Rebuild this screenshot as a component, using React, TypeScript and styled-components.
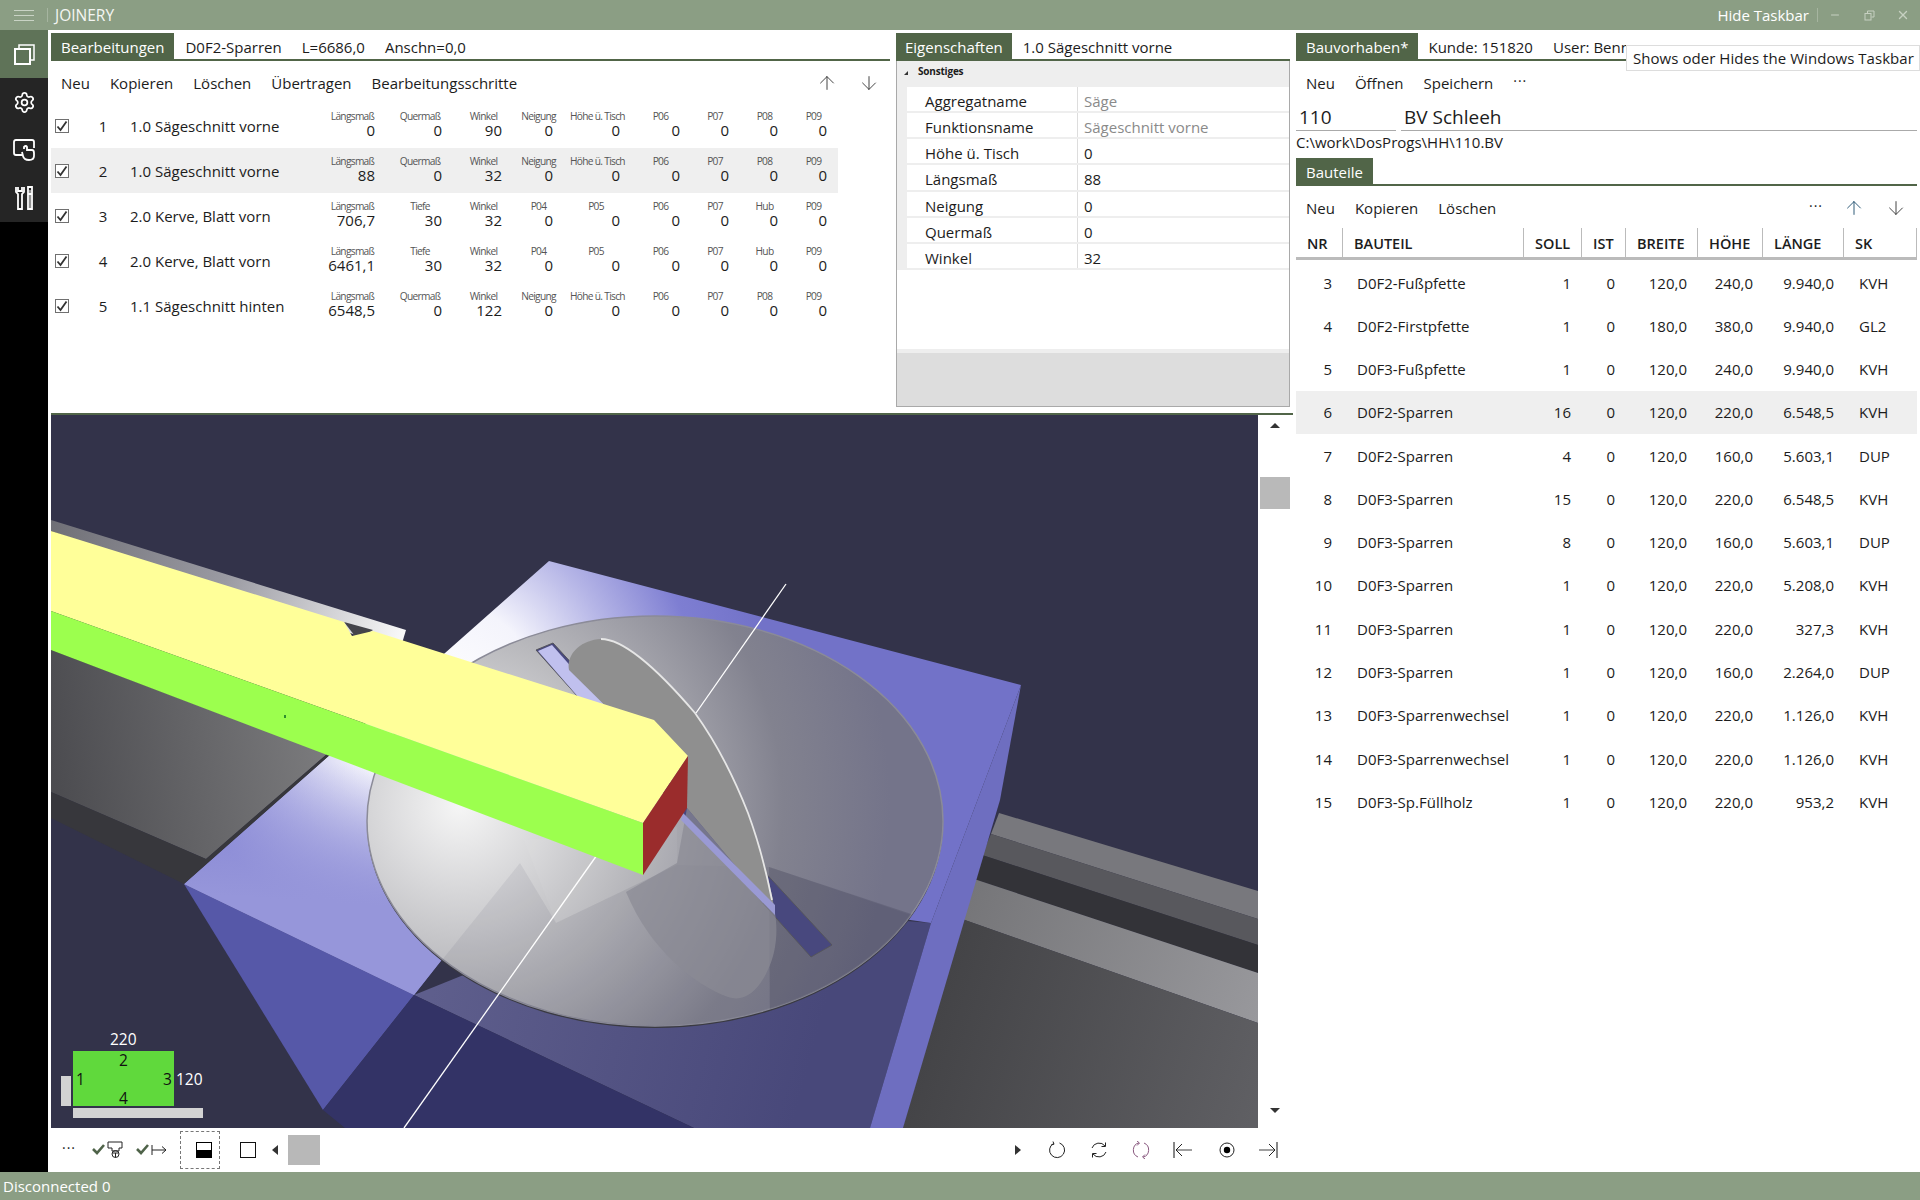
import React from "react";
import styled, { createGlobalStyle } from "styled-components";
import { ArrowUp, ArrowDown, Settings, X, Minus } from "lucide-react";

const TITLE = "#8b9e84";
const TAB = "#516548";
const FONT = `"Open Sans", "Noto Sans", sans-serif`;

const Global = createGlobalStyle`
  html, body { margin: 0; padding: 0; background: #fff; }
  body { font-family: ${FONT}; font-size: 15px; color: #1c1c1c; }
  * { box-sizing: border-box; }
`;

const Page = styled.div`
  position: relative;
  width: 1920px;
  height: 1200px;
  display: flex;
  flex-direction: column;
  overflow: hidden;
`;
const TitleBar = styled.header`
  height: 30px;
  background: ${TITLE};
  color: #fff;
  display: flex;
  align-items: center;
  padding-left: 14px;
`;
const Burger = styled.div`
  width: 20px;
  height: 11px;
  border-top: 1px solid #c9d3c5;
  border-bottom: 1px solid #c9d3c5;
  position: relative;
  &::after {
    content: "";
    position: absolute;
    left: 0;
    right: 0;
    top: 4px;
    height: 1px;
    background: #c9d3c5;
  }
`;
const TitleSep = styled.div<{ $l: number; $r: number }>`
  width: 1px;
  height: 14px;
  background: #a6b5a0;
  margin: 0 ${(p) => p.$r}px 0 ${(p) => p.$l}px;
`;
const AppName = styled.span`
  font-size: 15.5px;
  color: #f4f6f3;
`;
const TitleRight = styled.div`
  margin-left: auto;
  display: flex;
  align-items: center;
  color: #dfe5dc;
`;
const TaskbarLabel = styled.span`
  color: #fff;
`;
const WinBtn = styled.div`
  width: 34px;
  display: flex;
  justify-content: center;
  align-items: center;
  color: #c6d0c1;
`;
const Body = styled.div`
  flex: 1;
  display: flex;
  min-height: 0;
`;
const Sidebar = styled.nav`
  width: 48px;
  background: #000;
  display: flex;
  flex-direction: column;
`;
const SideItem = styled.div<{ $active?: boolean }>`
  width: 48px;
  height: 48px;
  background: ${(p) => (p.$active ? "#5f7358" : "#252525")};
  display: flex;
  align-items: center;
  justify-content: center;
  color: #fff;
`;
const Main = styled.main`
  flex: 1;
  display: flex;
  min-width: 0;
`;
const LeftColumn = styled.div`
  width: 1245px;
  padding-left: 3px;
  display: flex;
  flex-direction: column;
`;
const TopRow = styled.div`
  height: 383px;
  display: flex;
  gap: 6px;
`;
const Panel = styled.section<{ $w: number }>`
  width: ${(p) => p.$w}px;
  display: flex;
  flex-direction: column;
`;
const TabHeader = styled.div<{ $top?: number }>`
  margin-top: ${(p) => p.$top ?? 3}px;
  height: 28px;
  flex: none;
  border-bottom: 2px solid ${TAB};
  display: flex;
  align-items: stretch;
`;
const Tab = styled.div<{ $pad?: number }>`
  background: ${TAB};
  color: #fff;
  padding: 1px ${(p) => p.$pad ?? 10}px 0;
  display: flex;
  align-items: center;
  white-space: nowrap;
`;
const TabInfo = styled.div<{ $left: number }>`
  margin-left: ${(p) => p.$left}px;
  padding-top: 1px;
  display: flex;
  align-items: center;
  white-space: nowrap;
`;
const Toolbar = styled.div`
  height: 44px;
  flex: none;
  display: flex;
  align-items: center;
  padding: 0 10px;
  gap: 20px;
`;
const ToolSpacer = styled.div`
  flex: 1;
`;
const Dots = styled.span`
  font-size: 14px;
  letter-spacing: 1px;
  line-height: 1;
  transform: translateY(-2px);
`;
const ArrowSlot = styled.div<{ $w: number; $color?: string }>`
  width: ${(p) => p.$w}px;
  display: flex;
  justify-content: center;
  color: ${(p) => p.$color ?? "#333"};
`;
const OpList = styled.div`
  margin-top: -2px;
`;
const OpRow = styled.div<{ $on?: boolean }>`
  height: 45px;
  width: 787px;
  display: flex;
  background: ${(p) => (p.$on ? "#efefef" : "transparent")};
`;
const Check = styled.div`
  width: 14px;
  height: 14px;
  margin: 16px 0 0 4px;
  border: 1px solid #707070;
  background: #fff;
  display: flex;
  align-items: center;
  justify-content: center;
`;
const OpNo = styled.div`
  width: 61px;
  padding: 13px 0 0 7px;
  text-align: center;
  line-height: 20px;
`;
const OpName = styled.div`
  width: 195px;
  padding-top: 13px;
  line-height: 20px;
  white-space: nowrap;
`;
const Cell = styled.div<{ $w: number }>`
  width: ${(p) => p.$w}px;
  padding-top: 7px;
  display: flex;
  flex-direction: column;
`;
const CellLabel = styled.div`
  font-size: 10.2px;
  letter-spacing: -0.7px;
  line-height: 12px;
  color: #555;
  text-align: center;
  white-space: nowrap;
  height: 12px;
`;
const CellValue = styled.div<{ $pad: number }>`
  text-align: right;
  padding-right: ${(p) => p.$pad}px;
  line-height: 20px;
  margin-top: -2px;
`;
const PropBody = styled.div`
  flex: 1;
  border: 1px solid #a9a9a9;
  border-top: 0;
  margin-bottom: 6px;
  display: flex;
  flex-direction: column;
  min-height: 0;
`;
const GroupHead = styled.div`
  height: 26px;
  background: #eee;
  display: flex;
  align-items: flex-start;
  padding: 3px 0 0 7px;
  font-size: 10px;
  font-weight: 700;
  letter-spacing: -0.2px;
  line-height: 14px;
`;
const GroupMark = styled.div`
  width: 0;
  height: 0;
  margin: 7px 10px 0 0;
  border-left: 4px solid transparent;
  border-bottom: 4px solid #333;
`;
const PropRow = styled.div`
  height: 26.15px;
  flex: none;
  display: flex;
  border-bottom: 2px solid #eee;
  border-left: 10px solid #eee;
  line-height: 22px;
`;
const PropName = styled.div`
  width: 171px;
  padding: 3px 0 0 18px;
  border-right: 1px solid #ddd;
`;
const PropValue = styled.div<{ $dim?: boolean }>`
  padding: 3px 0 0 6px;
  color: ${(p) => (p.$dim ? "#8a8a8a" : "#1c1c1c")};
`;
const PropFill = styled.div`
  flex: 1;
`;
const PropFooter = styled.div`
  height: 57px;
  background: #ddd;
  border-top: 4px solid #eee;
`;
const ViewRow = styled.div`
  height: 715px;
  border-top: 2px solid ${TAB};
  display: flex;
`;
const CanvasBox = styled.div`
  position: relative;
  width: 1207px;
  height: 713px;
  background: #33334a;
  overflow: hidden;
`;
const Scene = styled.svg`
  display: block;
  width: 1207px;
  height: 713px;
`;
const Scroll = styled.div`
  width: 32px;
  position: relative;
`;
const ScrollTri = styled.div<{ $up?: boolean }>`
  position: absolute;
  left: 12px;
  ${(p) => (p.$up ? "top: 8px;" : "bottom: 15px;")}
  border-left: 5px solid transparent;
  border-right: 5px solid transparent;
  ${(p) => (p.$up ? "border-bottom: 5px solid #333;" : "border-top: 5px solid #333;")}
`;
const ScrollThumb = styled.div`
  position: absolute;
  left: 2px;
  top: 62px;
  width: 30px;
  height: 32px;
  background: #b9b9b9;
`;
const Mini = styled.div`
  position: absolute;
  left: 10px;
  top: 610px;
  width: 150px;
  height: 95px;
  font-size: 15.5px;
`;
const MiniFace = styled.div`
  position: absolute;
  left: 12px;
  top: 26px;
  width: 101px;
  height: 55px;
  background: #60d93c;
  color: #111;
`;
const MiniEdge = styled.span<{ $x: number; $y: number }>`
  position: absolute;
  left: ${(p) => p.$x}px;
  top: ${(p) => p.$y}px;
  line-height: 16px;
`;
const MiniDim = styled.span<{ $x: number; $y: number }>`
  position: absolute;
  left: ${(p) => p.$x}px;
  top: ${(p) => p.$y}px;
  color: #fff;
  line-height: 16px;
`;
const MiniBar = styled.div<{ $x: number; $y: number; $w: number; $h: number }>`
  position: absolute;
  left: ${(p) => p.$x}px;
  top: ${(p) => p.$y}px;
  width: ${(p) => p.$w}px;
  height: ${(p) => p.$h}px;
  background: #d3d3d3;
`;
const BottomBar = styled.div`
  height: 44px;
  display: flex;
  align-items: center;
  padding-left: 11px;
`;
const BarIcon = styled.div<{ $w: number; $ml?: number }>`
  width: ${(p) => p.$w}px;
  margin-left: ${(p) => p.$ml ?? 0}px;
  height: 20px;
  display: flex;
  align-items: center;
  justify-content: center;
  flex: none;
`;
const FocusBtn = styled.div`
  width: 40px;
  height: 38px;
  margin-left: 12px;
  padding-left: 8px;
  border: 1px dashed #777;
  display: flex;
  align-items: center;
  justify-content: center;
`;
const HalfSquare = styled.div`
  width: 16px;
  height: 16px;
  border: 1.5px solid #000;
  background: linear-gradient(#fff 50%, #000 50%);
`;
const EmptySquare = styled.div`
  width: 16px;
  height: 16px;
  border: 1.5px solid #111;
  background: #fff;
  margin-left: 20px;
`;
const TriBtn = styled.div<{ $left?: boolean; $ml: number }>`
  width: 0;
  height: 0;
  margin-left: ${(p) => p.$ml}px;
  border-top: 5px solid transparent;
  border-bottom: 5px solid transparent;
  ${(p) => (p.$left ? "border-right: 6px solid #333;" : "border-left: 6px solid #333;")}
`;
const ColorSwatch = styled.div`
  width: 32px;
  height: 30px;
  margin-left: 10px;
  background: #b8b8b8;
`;
const BarSpacer = styled.div`
  flex: 1;
`;
const RightPanel = styled.section`
  width: 621px;
  margin-left: 3px;
  display: flex;
  flex-direction: column;
`;
const InputRow = styled.div`
  height: 26px;
  display: flex;
  gap: 5px;
`;
const BigInput = styled.div<{ $w?: number }>`
  ${(p) => (p.$w ? `width: ${p.$w}px;` : "flex: 1;")}
  border-bottom: 1px solid #aaa;
  font-size: 19px;
  line-height: 25px;
  padding-left: 3px;
  white-space: nowrap;
`;
const PathLine = styled.div`
  height: 27px;
  line-height: 23px;
`;
const COLS = "47px 181px 58px 44px 72px 65px 81px 73px";
const THead = styled.div`
  display: grid;
  grid-template-columns: ${COLS};
  height: 32px;
  flex: none;
  margin-top: -2px;
  border-bottom: 3px solid #bbb;
`;
const TH = styled.div`
  border-right: 1px solid #bbb;
  padding-left: 11px;
  font-weight: 600;
  font-size: 14.5px;
  line-height: 32px;
  white-space: nowrap;
`;
const TBody = styled.div`
  padding-top: 1px;
`;
const TR = styled.div<{ $on?: boolean }>`
  display: grid;
  grid-template-columns: ${COLS};
  height: 43.27px;
  align-items: center;
  background: ${(p) => (p.$on ? "#efefef" : "transparent")};
`;
const TD = styled.div<{ $left?: boolean; $pad: number }>`
  text-align: ${(p) => (p.$left ? "left" : "right")};
  ${(p) => (p.$left ? `padding-left: ${p.$pad}px;` : `padding-right: ${p.$pad}px;`)}
  white-space: nowrap;
`;
const StatusBar = styled.footer`
  height: 28px;
  background: ${TITLE};
  color: #fff;
  display: flex;
  align-items: center;
  padding-left: 3px;
`;
const Tooltip = styled.div`
  position: absolute;
  left: 1626px;
  top: 45px;
  width: 294px;
  height: 26px;
  background: #fff;
  border: 1px solid #ddd;
  padding-left: 6px;
  line-height: 24px;
  white-space: nowrap;
  letter-spacing: 0.05px;
`;

type C = [string, string];
const WIDTHS: [number, number][] = [
  [55, 5], [80, 18], [47, 5], [63, 17], [52, 2], [77, 19], [32, 2], [67, 20], [31, 2],
];
const L = "Längsmaß", Q = "Quermaß", W = "Winkel", N = "Neigung", H = "Höhe ü. Tisch";
const saw = (a: string, w: string, b = "0"): C[] => [[L, a], [Q, b], [W, w], [N, "0"], [H, "0"], ["P06", "0"], ["P07", "0"], ["P08", "0"], ["P09", "0"]];
const kerve = (a: string): C[] => [[L, a], ["Tiefe", "30"], [W, "32"], ["P04", "0"], ["P05", "0"], ["P06", "0"], ["P07", "0"], ["Hub", "0"], ["P09", "0"]];
const OPS = [
  { n: 1, name: "1.0 Sägeschnitt vorne", c: saw("0", "90") },
  { n: 2, name: "1.0 Sägeschnitt vorne", c: saw("88", "32"), on: true },
  { n: 3, name: "2.0 Kerve, Blatt vorn", c: kerve("706,7") },
  { n: 4, name: "2.0 Kerve, Blatt vorn", c: kerve("6461,1") },
  { n: 5, name: "1.1 Sägeschnitt hinten", c: saw("6548,5", "122") },
];
const PROPS: [string, string, boolean?][] = [
  ["Aggregatname", "Säge", true],
  ["Funktionsname", "Sägeschnitt vorne", true],
  ["Höhe ü. Tisch", "0"],
  ["Längsmaß", "88"],
  ["Neigung", "0"],
  ["Quermaß", "0"],
  ["Winkel", "32"],
];
const PARTS = [
  ["3", "D0F2-Fußpfette", "1", "120,0", "240,0", "9.940,0", "KVH"],
  ["4", "D0F2-Firstpfette", "1", "180,0", "380,0", "9.940,0", "GL2"],
  ["5", "D0F3-Fußpfette", "1", "120,0", "240,0", "9.940,0", "KVH"],
  ["6", "D0F2-Sparren", "16", "120,0", "220,0", "6.548,5", "KVH"],
  ["7", "D0F2-Sparren", "4", "120,0", "160,0", "5.603,1", "DUP"],
  ["8", "D0F3-Sparren", "15", "120,0", "220,0", "6.548,5", "KVH"],
  ["9", "D0F3-Sparren", "8", "120,0", "160,0", "5.603,1", "DUP"],
  ["10", "D0F3-Sparren", "1", "120,0", "220,0", "5.208,0", "KVH"],
  ["11", "D0F3-Sparren", "1", "120,0", "220,0", "327,3", "KVH"],
  ["12", "D0F3-Sparren", "1", "120,0", "160,0", "2.264,0", "DUP"],
  ["13", "D0F3-Sparrenwechsel", "1", "120,0", "220,0", "1.126,0", "KVH"],
  ["14", "D0F3-Sparrenwechsel", "1", "120,0", "220,0", "1.126,0", "KVH"],
  ["15", "D0F3-Sp.Füllholz", "1", "120,0", "220,0", "953,2", "KVH"],
];
const HEAD = ["NR", "BAUTEIL", "SOLL", "IST", "BREITE", "HÖHE", "LÄNGE", "SK"];

const Tick = () => (
  <svg width="12" height="12" viewBox="0 0 12 12" fill="none">
    <path d="M1.5 6.5 L4.5 10 L10.5 1.5" stroke="#333" strokeWidth="1.8" />
  </svg>
);
const CopyIcon = () => (
  <svg width="24" height="24" viewBox="0 0 24 24" fill="none" stroke="#fff" strokeWidth="2">
    <rect x="3" y="7" width="15" height="15" />
    <path d="M7 6 V3 H22 V18 H19" strokeWidth="1.5" />
  </svg>
);
const MonitorHand = () => (
  <svg width="24" height="24" viewBox="0 0 24 24" fill="none" stroke="#fff" strokeWidth="1.8">
    <path d="M12 17 H4 Q2 17 2 15 V4 Q2 2 4 2 H20 Q22 2 22 4 V10" />
    <path d="M12 11 V9 Q14 7 15 9 V12 H20 Q22 12 22 15 V18 Q22 22 17 22 Q12 22 11 18 L10 14" fill="#252525" />
  </svg>
);
const ToolsIcon = () => (
  <svg width="24" height="26" viewBox="0 0 24 26" fill="none" stroke="#fff" strokeWidth="1.8">
    <path d="M6 2 V6 H10 V2 M4 2 V7 L6 9 V24 H10 V9 L12 7 V2" />
    <path d="M16 2 H20 V9 H16 Z M16 9 L16 24 H20 V9" />
    <path d="M18 5 V24" strokeWidth="1" />
  </svg>
);
const CheckMark = () => (
  <path d="M1 8 L5 12 L12 4" stroke="#4f6349" strokeWidth="2.6" fill="none" />
);
const CheckMachine = () => (
  <svg width="32" height="18" viewBox="0 0 32 18" fill="none">
    <CheckMark />
    <path d="M16 1 H30 V7 H27 V10 H20 V7 H16 Z" stroke="#222" strokeWidth="1" />
    <circle cx="23.5" cy="13" r="3.5" stroke="#222" />
    <path d="M20.5 12 H26.5 M23.5 12 V16.5" stroke="#222" />
  </svg>
);
const CheckArrow = () => (
  <svg width="32" height="18" viewBox="0 0 32 18" fill="none">
    <CheckMark />
    <path d="M16 4 V14 M16 9 H30 M26 5.5 L30 9 L26 12.5" stroke="#222" strokeWidth="1" />
  </svg>
);
const Rot = ({ kind, color = "#222" }: { kind: "cw" | "both" | "ccw"; color?: string }) => (
  <svg width="18" height="18" viewBox="0 0 18 18" fill="none" stroke={color} strokeWidth="1">
    {kind === "cw" && (
      <>
        <path d="M5.5 2.5 A7.5 7.5 0 1 0 11.5 2" />
        <path d="M5 0.5 L6 3.2 L3.2 4" />
      </>
    )}
    {kind === "both" && (
      <>
        <path d="M2 7 A7.5 7.5 0 0 1 15 5" />
        <path d="M16 11 A7.5 7.5 0 0 1 3 13" />
        <path d="M15.5 1.5 V5.5 H11.5 M2.5 16.5 V12.5 H6.5" />
      </>
    )}
    {kind === "ccw" && (
      <>
        <path d="M7 1.8 A7.5 7.5 0 0 0 6 16" />
        <path d="M11 16.2 A7.5 7.5 0 0 0 12 2" />
        <path d="M5 0 L7.5 2 L5 4.5 M13 18 L10.5 16 L13 13.5" />
      </>
    )}
  </svg>
);
const First = () => (
  <svg width="20" height="18" viewBox="0 0 20 18" fill="none">
    <path d="M1 1 V17" stroke="#111" />
    <path d="M3 9 H19" stroke="#777" strokeWidth="1.4" />
    <path d="M9 3 L3 9 L9 15" stroke="#222" />
  </svg>
);
const Last = () => (
  <svg width="20" height="18" viewBox="0 0 20 18" fill="none">
    <path d="M19 1 V17" stroke="#111" />
    <path d="M1 9 H17" stroke="#777" strokeWidth="1.4" />
    <path d="M11 3 L17 9 L11 15" stroke="#222" />
  </svg>
);
const Target = () => (
  <svg width="16" height="16" viewBox="0 0 16 16" fill="none">
    <circle cx="8" cy="8" r="7" stroke="#222" />
    <circle cx="8" cy="8" r="3.2" fill="#000" />
  </svg>
);

const View3D = () => (
  <Scene viewBox="51 415 1207 713" preserveAspectRatio="none">
    <defs>
      <radialGradient id="plate" gradientUnits="userSpaceOnUse" cx="440" cy="700" r="330">
        <stop offset="0" stopColor="#ffffff" />
        <stop offset="0.3" stopColor="#f4f4fc" />
        <stop offset="0.55" stopColor="#b4b4e6" />
        <stop offset="0.78" stopColor="#7e7ed2" />
        <stop offset="1" stopColor="#7272c8" />
      </radialGradient>
      <linearGradient id="plateLow" gradientUnits="userSpaceOnUse" x1="300" y1="760" x2="290" y2="900">
        <stop offset="0" stopColor="#9c9cdc" stopOpacity="0" />
        <stop offset="1" stopColor="#9696da" stopOpacity="1" />
      </linearGradient>
      <radialGradient id="disc" gradientUnits="userSpaceOnUse" cx="460" cy="805" r="430">
        <stop offset="0" stopColor="#f6f6f6" />
        <stop offset="0.4" stopColor="#b8b8bc" />
        <stop offset="0.75" stopColor="#82828f" />
        <stop offset="1" stopColor="#74748a" />
      </radialGradient>
      <linearGradient id="under" gradientUnits="userSpaceOnUse" x1="430" y1="1000" x2="800" y2="1100">
        <stop offset="0" stopColor="#5e5e8c" />
        <stop offset="1" stopColor="#48487a" />
      </linearGradient>
      <linearGradient id="strip" gradientUnits="userSpaceOnUse" x1="51" y1="520" x2="400" y2="640">
        <stop offset="0" stopColor="#6f6f76" />
        <stop offset="0.5" stopColor="#9a9aa2" />
        <stop offset="1" stopColor="#f8f8f8" />
      </linearGradient>
      <linearGradient id="beamSide" gradientUnits="userSpaceOnUse" x1="51" y1="760" x2="340" y2="720">
        <stop offset="0" stopColor="#4c4c50" />
        <stop offset="1" stopColor="#7e7e80" />
      </linearGradient>
      <linearGradient id="rightBand" gradientUnits="userSpaceOnUse" x1="960" y1="900" x2="1258" y2="1020">
        <stop offset="0" stopColor="#757578" />
        <stop offset="1" stopColor="#98989c" />
      </linearGradient>
      <linearGradient id="rightLow" gradientUnits="userSpaceOnUse" x1="940" y1="1000" x2="1258" y2="1100">
        <stop offset="0" stopColor="#444447" />
        <stop offset="1" stopColor="#5f5f63" />
      </linearGradient>
      <clipPath id="discClip">
        <ellipse cx="655" cy="821" rx="288" ry="205" />
      </clipPath>
    </defs>

    {/* right hand beam */}
    <polygon points="999,813 1258,891 1258,919 991,834" fill="#78787d" />
    <polygon points="991,834 1258,919 1258,945 982,855" fill="#58585d" />
    <polygon points="982,855 1258,945 1258,973 974,879" fill="#333338" />
    <polygon points="974,879 1258,973 1258,1023 962,919" fill="url(#rightBand)" />
    <polygon points="962,919 1258,1023 1258,1128 903,1128" fill="url(#rightLow)" />

    {/* plate */}
    <polygon points="414,995 694,1128 870,1128 931,923 650,900" fill="url(#under)" />
    <polygon points="184,884 323,1110 414,995" fill="#5658a8" />
    <polygon points="323,1110 345,1128 694,1128 414,995" fill="#333366" />
    <polygon points="549,561 1021,685 931,923 518,863 414,995 184,884" fill="url(#plate)" />
    <polygon points="184,884 330,754 500,754 518,863 414,995" fill="url(#plateLow)" />
    <polygon points="1021,685 931,923 870,1128 903,1128 1000,800" fill="#6e6ec0" />

    {/* left back beam */}
    <polygon points="51,650 327,754 206,859 51,792" fill="url(#beamSide)" />
    <polygon points="51,792 206,859 327,754 333,752 184,884 51,818" fill="#37373c" />

    {/* saw disc */}
    <ellipse cx="655" cy="823" rx="288" ry="205" fill="#3a3a42" />
    <ellipse cx="655" cy="821" rx="288" ry="205" fill="url(#disc)" stroke="#8b8b98" strokeWidth="1.5" />
    <g clipPath="url(#discClip)">
      <polygon points="520,863 430,975 500,1040 900,1040 911,915 769,867 677,865 556,923" fill="#33334a" opacity="0.08" />
      <polygon points="524,840 556,923 677,865 677,827" fill="#ffffff" opacity="0.05" />
      <polygon points="769,867 960,930 960,1040 770,1040" fill="#33334a" opacity="0.22" />
    </g>

    {/* slot */}
    <polygon points="536,650 553,643 832,945 811,957" fill="#48487e" stroke="#55555c" strokeWidth="1" />
    <polygon points="538,651 552,645 620,722 600,722" fill="#c0c0ee" />

    {/* blade, lower translucent lobe */}
    <path d="M626 892 C650 950 695 985 728 997 C745 1003 760 990 770 965 C778 945 777 925 775 913 L687 808 L677 863 Z" fill="#8a8a94" opacity="0.7" />
    {/* blade, upper opaque */}
    <path d="M601 639 C625 639 660 672 695 713 C718 745 735 780 748 813 C760 845 770 880 775 913 L687 808 L640 740 L569 670 C566 655 580 640 601 639 Z" fill="#8f8f8f" />
    <polygon points="683,813 775,905 775,915 681,820" fill="#9a9ad4" />
    <path d="M601 639 C625 639 660 672 695 713 C718 745 735 780 748 813 C758 840 766 870 772 900" stroke="#e6e6e6" strokeWidth="1.8" fill="none" />

    {/* white axis */}
    <line x1="786" y1="584" x2="696" y2="713" stroke="#fff" strokeWidth="1.3" />
    <line x1="597" y1="855" x2="404" y2="1128" stroke="#fff" strokeWidth="1.3" />

    {/* workpiece */}
    <polygon points="51,520 406,630 400,650 51,531" fill="url(#strip)" />
    <polygon points="344,622 358,640 373,630" fill="#44444a" />
    <polygon points="51,531 344,622 352,636 373,631 654,720 688,756 643,823 51,611" fill="#ffff99" />
    <polygon points="51,611 643,823 643,875 51,650" fill="#9cff4e" />
    <polygon points="688,756 687,808 643,875 643,823" fill="#9a2c2c" />
    <rect x="284" y="715" width="2" height="3" fill="#2f8f2f" />
  </Scene>
);

export default function App() {
  return (
    <Page>
      <Global />
      <TitleBar>
        <Burger />
        <TitleSep $l={13} $r={7} />
        <AppName>JOINERY</AppName>
        <TitleRight>
          <TaskbarLabel>Hide Taskbar</TaskbarLabel>
          <TitleSep $l={8} $r={0} />
          <WinBtn><Minus size={12} /></WinBtn>
          <WinBtn>
            <svg width="11" height="11" viewBox="0 0 11 11" fill="none" stroke="currentColor">
              <rect x="1" y="3.5" width="6" height="6.5" />
              <path d="M3.5 3 V1 H10 V7 H7.5" />
            </svg>
          </WinBtn>
          <WinBtn><X size={14} strokeWidth={2.4} /></WinBtn>
        </TitleRight>
      </TitleBar>
      <Body>
        <Sidebar>
          <SideItem $active><CopyIcon /></SideItem>
          <SideItem><Settings size={23} strokeWidth={1.8} /></SideItem>
          <SideItem><MonitorHand /></SideItem>
          <SideItem><ToolsIcon /></SideItem>
        </Sidebar>
        <Main>
          <LeftColumn>
            <TopRow>
              <Panel $w={839}>
                <TabHeader>
                  <Tab>Bearbeitungen</Tab>
                  <TabInfo $left={11}>D0F2-Sparren</TabInfo>
                  <TabInfo $left={20}>L=6686,0</TabInfo>
                  <TabInfo $left={20}>Anschn=0,0</TabInfo>
                </TabHeader>
                <Toolbar>
                  <span>Neu</span>
                  <span>Kopieren</span>
                  <span>Löschen</span>
                  <span>Übertragen</span>
                  <span>Bearbeitungsschritte</span>
                  <ToolSpacer />
                  <ArrowSlot $w={22}><ArrowUp size={22} strokeWidth={1} /></ArrowSlot>
                  <ArrowSlot $w={22}><ArrowDown size={22} strokeWidth={1} /></ArrowSlot>
                </Toolbar>
                <OpList>
                  {OPS.map((op) => (
                    <OpRow key={op.n} $on={op.on}>
                      <Check><Tick /></Check>
                      <OpNo>{op.n}</OpNo>
                      <OpName>{op.name}</OpName>
                      {op.c.map(([label, value], i) => (
                        <Cell key={i} $w={WIDTHS[i][0]}>
                          <CellLabel>{label}</CellLabel>
                          <CellValue $pad={WIDTHS[i][1]}>{value}</CellValue>
                        </Cell>
                      ))}
                    </OpRow>
                  ))}
                </OpList>
              </Panel>
              <Panel $w={394}>
                <TabHeader>
                  <Tab $pad={9}>Eigenschaften</Tab>
                  <TabInfo $left={11}>1.0 Sägeschnitt vorne</TabInfo>
                </TabHeader>
                <PropBody>
                  <GroupHead><GroupMark />Sonstiges</GroupHead>
                  {PROPS.map(([k, v, dim]) => (
                    <PropRow key={k}>
                      <PropName>{k}</PropName>
                      <PropValue $dim={dim}>{v}</PropValue>
                    </PropRow>
                  ))}
                  <PropFill />
                  <PropFooter />
                </PropBody>
              </Panel>
            </TopRow>
            <ViewRow>
              <CanvasBox>
                <View3D />
                <Mini>
                  <MiniDim $x={49} $y={6}>220</MiniDim>
                  <MiniFace>
                    <MiniEdge $x={46} $y={1}>2</MiniEdge>
                    <MiniEdge $x={3} $y={20}>1</MiniEdge>
                    <MiniEdge $x={90} $y={20}>3</MiniEdge>
                    <MiniEdge $x={46} $y={39}>4</MiniEdge>
                  </MiniFace>
                  <MiniDim $x={115} $y={46}>120</MiniDim>
                  <MiniBar $x={0} $y={51} $w={10} $h={30} />
                  <MiniBar $x={12} $y={83} $w={130} $h={10} />
                </Mini>
              </CanvasBox>
              <Scroll>
                <ScrollTri $up />
                <ScrollThumb />
                <ScrollTri />
              </Scroll>
            </ViewRow>
            <BottomBar>
              <Dots>···</Dots>
              <BarIcon $w={32} $ml={16}><CheckMachine /></BarIcon>
              <BarIcon $w={32} $ml={12}><CheckArrow /></BarIcon>
              <FocusBtn><HalfSquare /></FocusBtn>
              <EmptySquare />
              <TriBtn $left $ml={16} />
              <ColorSwatch />
              <BarSpacer />
              <TriBtn $ml={0} />
              <BarIcon $w={36} $ml={18}><Rot kind="cw" /></BarIcon>
              <BarIcon $w={48}><Rot kind="both" /></BarIcon>
              <BarIcon $w={36}><Rot kind="ccw" color="#8a5a80" /></BarIcon>
              <BarIcon $w={48}><First /></BarIcon>
              <BarIcon $w={40}><Target /></BarIcon>
              <BarIcon $w={42}><Last /></BarIcon>
              <BarIcon $w={1} $ml={3} />
            </BottomBar>
          </LeftColumn>
          <RightPanel>
            <TabHeader>
              <Tab>Bauvorhaben*</Tab>
              <TabInfo $left={10}>Kunde: 151820</TabInfo>
              <TabInfo $left={20}>User: Benn</TabInfo>
            </TabHeader>
            <Toolbar>
              <span>Neu</span>
              <span>Öffnen</span>
              <span>Speichern</span>
              <Dots>···</Dots>
            </Toolbar>
            <InputRow>
              <BigInput $w={100}>110</BigInput>
              <BigInput>BV Schleeh</BigInput>
            </InputRow>
            <PathLine>C:\work\DosProgs\HH\110.BV</PathLine>
            <TabHeader $top={0}>
              <Tab>Bauteile</Tab>
            </TabHeader>
            <Toolbar>
              <span>Neu</span>
              <span>Kopieren</span>
              <span>Löschen</span>
              <ToolSpacer />
              <Dots>···</Dots>
              <ArrowSlot $w={22} $color="#1d4d6b"><ArrowUp size={22} strokeWidth={1} /></ArrowSlot>
              <ArrowSlot $w={22}><ArrowDown size={22} strokeWidth={1} /></ArrowSlot>
            </Toolbar>
            <THead>
              {HEAD.map((h) => <TH key={h}>{h}</TH>)}
            </THead>
            <TBody>
              {PARTS.map((p) => (
                <TR key={p[0]} $on={p[0] === "6"}>
                  <TD $pad={11}>{p[0]}</TD>
                  <TD $left $pad={14}>{p[1]}</TD>
                  <TD $pad={11}>{p[2]}</TD>
                  <TD $pad={11}>0</TD>
                  <TD $pad={11}>{p[3]}</TD>
                  <TD $pad={10}>{p[4]}</TD>
                  <TD $pad={10}>{p[5]}</TD>
                  <TD $left $pad={15}>{p[6]}</TD>
                </TR>
              ))}
            </TBody>
          </RightPanel>
        </Main>
      </Body>
      <StatusBar>Disconnected 0</StatusBar>
      <Tooltip>Shows oder Hides the Windows Taskbar</Tooltip>
    </Page>
  );
}
